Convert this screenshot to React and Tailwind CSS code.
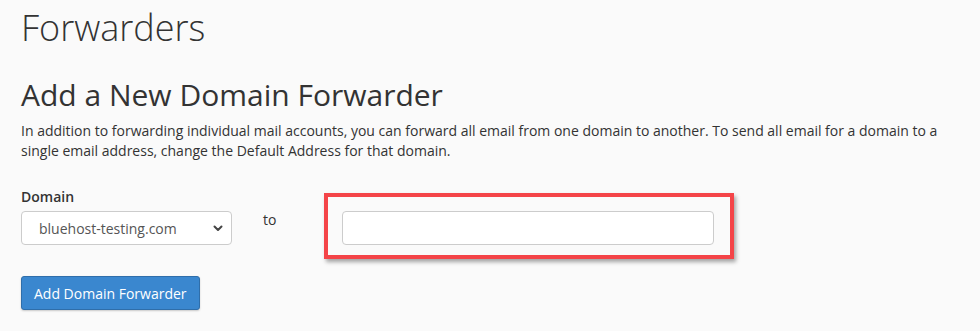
export default function App() {
    return (
        <div className="min-h-[331px] bg-[#fafafa] text-[#333] px-[21px] pt-2 font-['Open_Sans',sans-serif]">
            <h1 className="text-[36px] leading-[40px] font-light">Forwarders</h1>

            <h2 className="mt-[30px] text-[30px] leading-[33px] font-normal">Add a New Domain Forwarder</h2>
            <p className="mt-[10px] text-[14px] leading-[20px] max-w-[938px]">
                In addition to forwarding individual mail accounts, you can forward all email from one domain to another. To send all email for a domain to a single email address, change the Default Address for that domain.
            </p>

            <div className="mt-[26px] flex items-start">
                <div className="flex flex-col">
                    <label className="text-[14px] leading-[20px] font-semibold">Domain</label>
                    <div className="mt-[4px] w-[211px] h-[34px] flex items-center justify-between bg-white border border-[#ccc] rounded-[4px] pl-[17px] pr-[8px] text-[14px] text-[#555]">
                        <span>bluehost-testing.com</span>
                        <svg width="10" height="7" viewBox="0 0 10 7" fill="none" stroke="#444" strokeWidth="2" strokeLinecap="round" strokeLinejoin="round">
                            <path d="M1.5 1.5 5 5l3.5-3.5" />
                        </svg>
                    </div>
                </div>

                <div className="ml-[31px] mt-[23px] text-[14px] leading-[20px]">to</div>

                <div className="ml-[48px] mt-[6px] border-4 border-[#f44448] pt-[14px] pl-[14px] pr-[16px] pb-[10px] shadow-[2px_3px_4px_rgba(0,0,0,0.35)]">
                    <input type="text" className="block w-[372px] h-[34px] bg-white border border-[#ccc] rounded-[4px] px-3 text-[14px] outline-none" />
                </div>
            </div>

            <button className="mt-[17px] h-[34px] px-[12px] bg-[#3a87cf] border border-[#2f6eaa] rounded-[3px] text-white text-[14px] shadow-[0_1px_2px_rgba(0,0,0,0.2)]">
                Add Domain Forwarder
            </button>
        </div>
    )
}
